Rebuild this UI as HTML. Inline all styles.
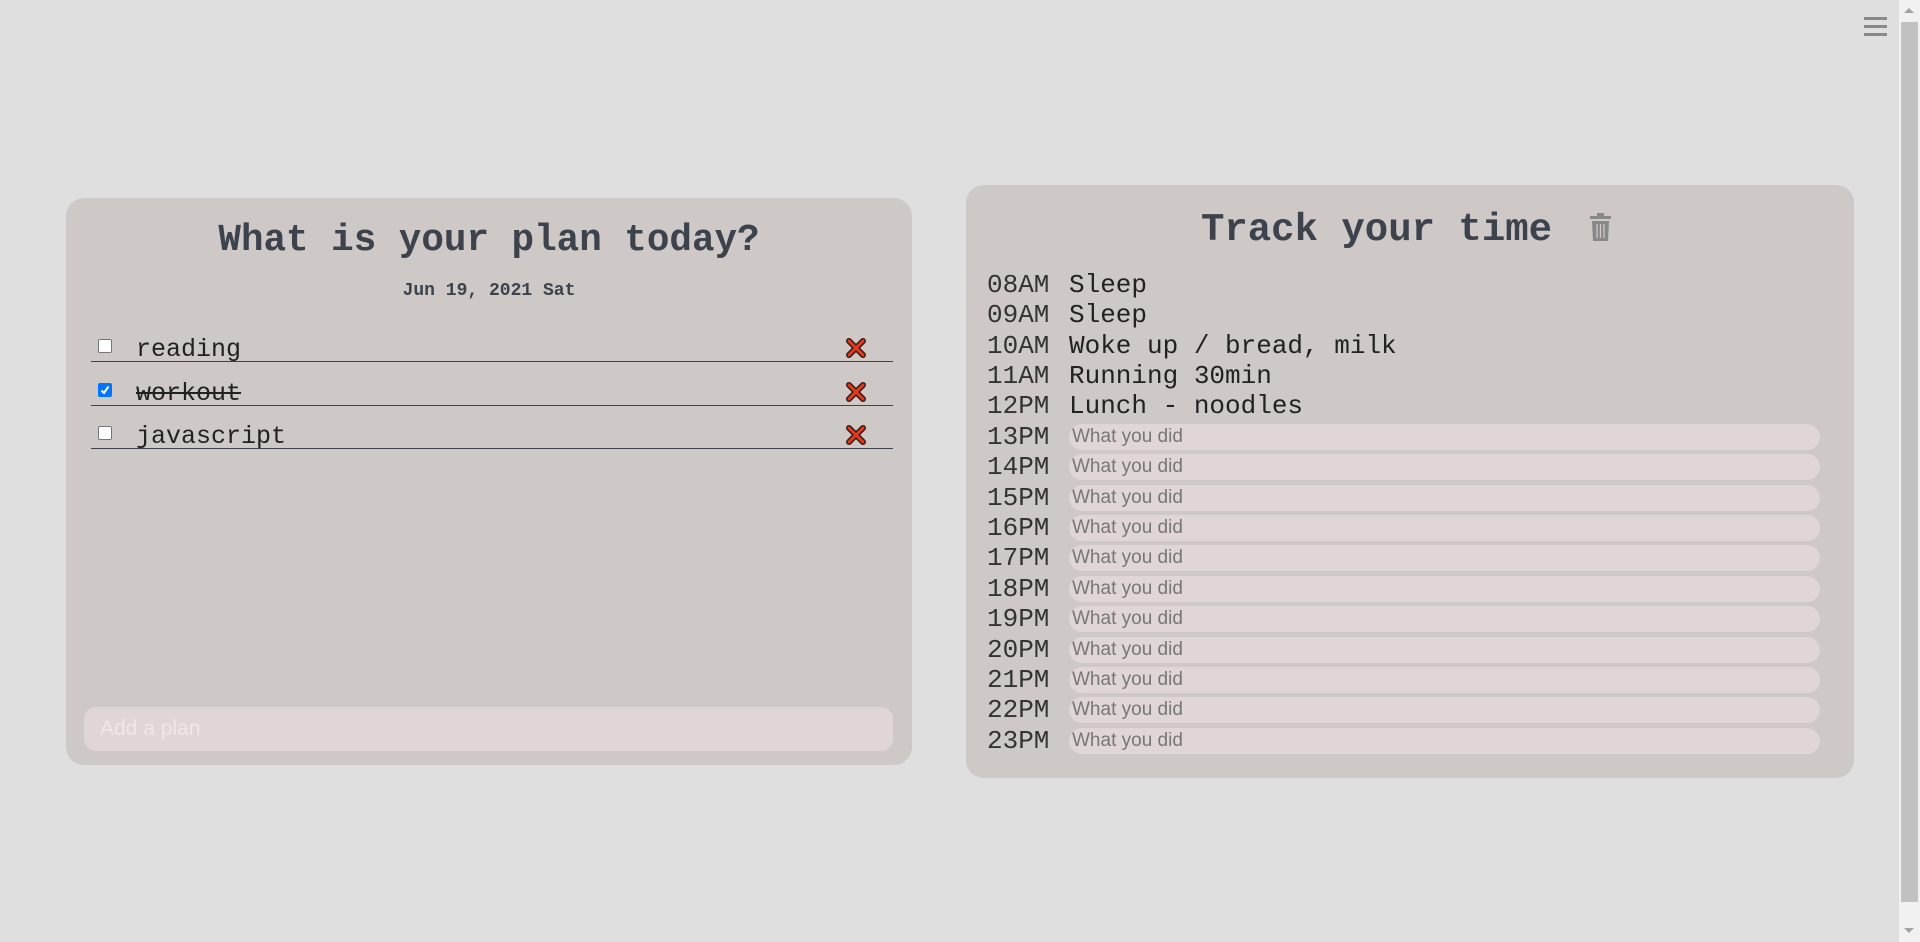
<!DOCTYPE html>
<html><head><meta charset="utf-8"><style>
*{margin:0;padding:0;box-sizing:border-box}
body{width:1920px;height:942px;background:#dfdfdf;position:relative;overflow:hidden;font-family:"Liberation Mono",monospace}
.card{position:absolute;background:#cec8c6;border-radius:18px}
.title{position:absolute;left:0;right:0;text-align:center;font-weight:bold;color:#3d434c;font-size:37.6px;font-family:"Liberation Mono",monospace}
.date{position:absolute;left:0;right:0;text-align:center;font-weight:bold;color:#3d434c;font-size:18px}
.todo{position:absolute;left:25px;width:802px;height:44px;border-bottom:1.5px solid #3d434c}
.todo .cb{position:absolute;left:7px;top:21px;width:14px;height:14px;background:#fff;border:1px solid #767676;border-radius:2px}
.todo .cb.on{background:#0075ff;border-color:#0075ff}
.todo .t{position:absolute;left:45px;top:17px;font-size:25px;color:#222;line-height:30px}
.todo svg.x{position:absolute;left:754px;top:19px}
.add{position:absolute;left:18px;top:509px;width:809px;height:44px;background:#e0d6d6;border-radius:12px;color:#eee8e8;font-family:"Liberation Sans",sans-serif;font-size:21px;line-height:44px;padding-left:16px}
.row{position:absolute;left:21px;height:30.4px;width:840px;font-size:26px;line-height:30.4px;color:#222}
.row .h{position:absolute;left:0;color:#333}
.row .v{position:absolute;left:82px}
.row .in{position:absolute;left:82px;top:2px;width:751px;height:26px;background:#e0d6d6;border-radius:13px;font-family:"Liberation Sans",sans-serif;font-size:19px;line-height:26px;color:#777;padding-left:3px}
</style></head><body>
<div class="card" style="left:66px;top:198px;width:846px;height:567px">
  <div class="title" style="top:22px">What is your plan today?</div>
  <div class="date" style="top:83px">Jun 19, 2021 Sat</div>
  <div class="todo" style="top:120px"><div class="cb"></div><div class="t">reading</div><svg class="x" width="22" height="22" viewBox="0 0 22 22"><path d="M4 4L18 18M18 4L4 18" stroke="#3a1a12" stroke-width="6" stroke-linecap="round"/><path d="M4 4L18 18M18 4L4 18" stroke="#e23a1c" stroke-width="3" stroke-linecap="round"/></svg></div>
  <div class="todo" style="top:164px"><div class="cb on"><svg width="12" height="12" viewBox="0 0 12 12" style="position:absolute;left:0;top:0"><path d="M2.5 6.5L5 9L9.5 2.5" stroke="#fff" stroke-width="2" fill="none"/></svg></div><div class="t" style="text-decoration:line-through">workout</div><svg class="x" width="22" height="22" viewBox="0 0 22 22"><path d="M4 4L18 18M18 4L4 18" stroke="#3a1a12" stroke-width="6" stroke-linecap="round"/><path d="M4 4L18 18M18 4L4 18" stroke="#e23a1c" stroke-width="3" stroke-linecap="round"/></svg></div>
  <div class="todo" style="top:207px"><div class="cb"></div><div class="t">javascript</div><svg class="x" width="22" height="22" viewBox="0 0 22 22"><path d="M4 4L18 18M18 4L4 18" stroke="#3a1a12" stroke-width="6" stroke-linecap="round"/><path d="M4 4L18 18M18 4L4 18" stroke="#e23a1c" stroke-width="3" stroke-linecap="round"/></svg></div>
  <div class="add">Add a plan</div>
</div>
<div class="card" style="left:966px;top:185px;width:888px;height:593px">
  <div class="title" style="top:23px;left:-67px;font-size:39px">Track your time</div>
  <svg style="position:absolute;left:622px;top:28px" width="25" height="28" viewBox="0 0 25 28"><rect x="2" y="3" width="21" height="3" fill="#888"/><rect x="9" y="0" width="7" height="4" fill="#888"/><path d="M4 8H21L20 28H5Z" fill="#888"/><path d="M9 11V25M12.5 11V25M16 11V25" stroke="#cec8c6" stroke-width="1.3"/></svg>
  <div class="row" style="top:84.8px"><span class="h">08AM</span><span class="v">Sleep</span></div>
  <div class="row" style="top:115.2px"><span class="h">09AM</span><span class="v">Sleep</span></div>
  <div class="row" style="top:145.6px"><span class="h">10AM</span><span class="v">Woke up / bread, milk</span></div>
  <div class="row" style="top:176px"><span class="h">11AM</span><span class="v">Running 30min</span></div>
  <div class="row" style="top:206.4px"><span class="h">12PM</span><span class="v">Lunch - noodles</span></div>
  <div class="row" style="top:236.8px"><span class="h">13PM</span><span class="in">What you did</span></div>
  <div class="row" style="top:267.2px"><span class="h">14PM</span><span class="in">What you did</span></div>
  <div class="row" style="top:297.6px"><span class="h">15PM</span><span class="in">What you did</span></div>
  <div class="row" style="top:328px"><span class="h">16PM</span><span class="in">What you did</span></div>
  <div class="row" style="top:358.4px"><span class="h">17PM</span><span class="in">What you did</span></div>
  <div class="row" style="top:388.8px"><span class="h">18PM</span><span class="in">What you did</span></div>
  <div class="row" style="top:419.2px"><span class="h">19PM</span><span class="in">What you did</span></div>
  <div class="row" style="top:449.6px"><span class="h">20PM</span><span class="in">What you did</span></div>
  <div class="row" style="top:480px"><span class="h">21PM</span><span class="in">What you did</span></div>
  <div class="row" style="top:510.4px"><span class="h">22PM</span><span class="in">What you did</span></div>
  <div class="row" style="top:540.8px"><span class="h">23PM</span><span class="in">What you did</span></div>
</div>
<div style="position:absolute;left:1864px;top:17px;width:23px;height:3px;background:#888;box-shadow:0 8px 0 #888,0 16px 0 #888"></div>
<div style="position:absolute;left:1899px;top:0;width:21px;height:942px;background:#f1f1f1"></div>
<div style="position:absolute;left:1901px;top:22px;width:17px;height:880px;background:#c1c1c1"></div>
<div style="position:absolute;left:1904px;top:8px;width:0;height:0;border-left:5px solid transparent;border-right:5px solid transparent;border-bottom:5px solid #a3a3a3"></div>
<div style="position:absolute;left:1904px;top:928px;width:0;height:0;border-left:5px solid transparent;border-right:5px solid transparent;border-top:5px solid #a3a3a3"></div>
</body></html>
